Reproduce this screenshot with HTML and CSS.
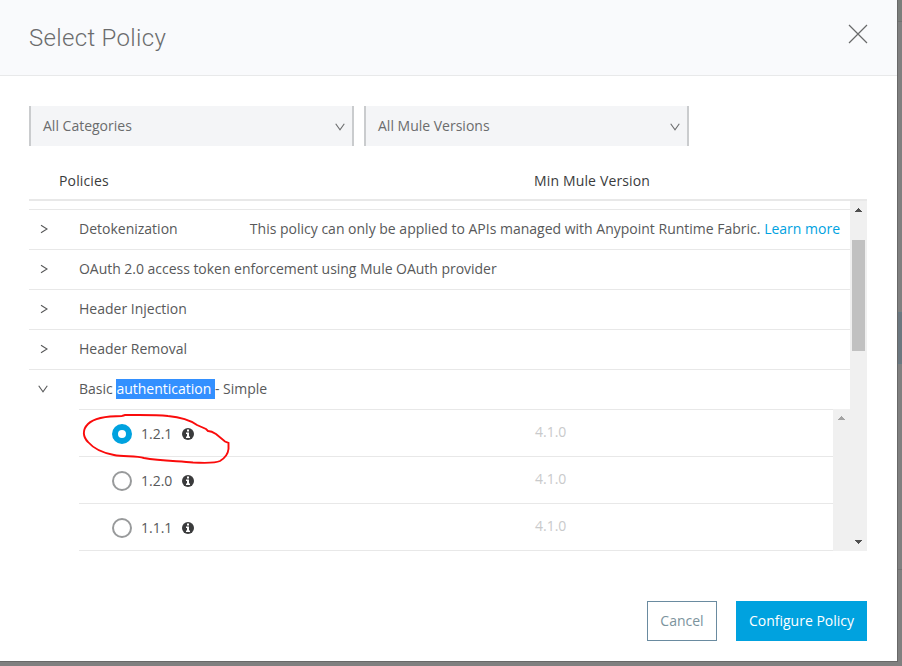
FILE: index.html
```html
<!DOCTYPE html>
<html lang="en">
<head>
<meta charset="utf-8">
<title>Select Policy</title>
<link rel="stylesheet" href="styles.css">
</head>
<body>
<div class="backdrop">
  <div class="modal">
    <header class="modal-header">
      <h1>Select Policy</h1>
      <svg class="close" viewBox="0 0 20 20"><path d="M1 1L19 19M19 1L1 19"/></svg>
    </header>
    <main class="modal-body">
      <div class="filters">
        <div class="select"><span>All Categories</span><svg class="chevron" viewBox="0 0 10 8"><path d="M.7 .7L5 6.9L9.3 .7"/></svg></div>
        <div class="select"><span>All Mule Versions</span><svg class="chevron" viewBox="0 0 10 8"><path d="M.7 .7L5 6.9L9.3 .7"/></svg></div>
      </div>
      <div class="table-head"><span class="col-policy">Policies</span><span>Min Mule Version</span></div>
      <div class="scroller">
        <div class="list">
          <div class="gap-row"></div>
          <div class="row"><svg class="caret" viewBox="0 0 8 10"><path d="M1 1.200L7 5L1 8.800"/></svg><span>Detokenization</span><span class="note">This policy can only be applied to APIs managed with Anypoint Runtime Fabric. <a>Learn more</a></span></div>
          <div class="row"><svg class="caret" viewBox="0 0 8 10"><path d="M1 1.200L7 5L1 8.800"/></svg><span class="long">OAuth 2.0 access token enforcement using Mule OAuth provider</span></div>
          <div class="row"><svg class="caret" viewBox="0 0 8 10"><path d="M1 1.200L7 5L1 8.800"/></svg><span>Header Injection</span></div>
          <div class="row"><svg class="caret" viewBox="0 0 8 10"><path d="M1 1.200L7 5L1 8.800"/></svg><span>Header Removal</span></div>
          <div class="row open"><svg class="caret down" viewBox="0 0 10 8"><path d="M.7 .7L5 6.9L9.3 .7"/></svg><span>Basic <mark>authentication </mark>- Simple</span></div>
          <div class="versions">
            <div class="version-list">
              <div class="version"><i class="radio checked"></i><span class="number">1.2.1</span><svg class="info" viewBox="0 0 12 12"><circle cx="6" cy="6" r="6"/><path d="M5 1.500h2v2H5zM4 4.500H7v4h1V10H4V8.500H5V6H4z"/></svg><span class="min">4.1.0</span></div>
              <div class="version"><i class="radio"></i><span class="number">1.2.0</span><svg class="info" viewBox="0 0 12 12"><circle cx="6" cy="6" r="6"/><path d="M5 1.500h2v2H5zM4 4.500H7v4h1V10H4V8.500H5V6H4z"/></svg><span class="min">4.1.0</span></div>
              <div class="version"><i class="radio"></i><span class="number">1.1.1</span><svg class="info" viewBox="0 0 12 12"><circle cx="6" cy="6" r="6"/><path d="M5 1.500h2v2H5zM4 4.500H7v4h1V10H4V8.500H5V6H4z"/></svg><span class="min">4.1.0</span></div>
            </div>
            <div class="scrollbar inner"><svg class="arrow" viewBox="0 0 7 4"><path d="M0 4V3h1V2h1V1h1V0h1v1h1v1h1v1h1v1z"/></svg></div>
          </div>
        </div>
        <div class="scrollbar">
          <svg class="arrow" viewBox="0 0 7 4"><path d="M0 4V3h1V2h1V1h1V0h1v1h1v1h1v1h1v1z"/></svg>
          <div class="thumb"></div>
          <svg class="arrow bottom" viewBox="0 0 7 4"><path d="M0 0V1h1V2h1V3h1V4h1V3h1V2h1V1h1V0z"/></svg>
        </div>
      </div>
    </main>
    <footer class="modal-footer">
      <button class="cancel">Cancel</button>
      <button class="primary">Configure Policy</button>
    </footer>
    <svg class="annotation" viewBox="0 0 150 52"><path d="M42 4C29 4 14 6 8 12C2 18 3 25 8 30C14 37 23 41 34 43C43 45 56 43.500 64 46C80 49 98 49 113 50.500C123 51 136 51 140 49C145 46 148 42 148.500 37V31L145 29.500L136 22C133 20 131 19 128 19L126 17L117 13C110 8 99 5 88 4C75 2.500 58 3 45 3L42 4"/></svg>
  </div>
  <div class="page-edge"><i class="edge-top"></i><i class="edge-panel"></i><i class="edge-rest"></i></div>
</div>
</body>
</html>
```

FILE: styles.css
```css
* { box-sizing: border-box; }
body { margin: 0; font: 14px/20px "Open Sans", sans-serif; color: #58595a; }
svg { display: block; flex: none; }
.backdrop { width: 902px; height: 666px; background: #808080; display: flex; overflow: hidden; }
.modal { position: relative; width: 898px; height: 662px; background: #fff; border: solid #686868; border-width: 0 1px 1px 0; }
.modal-header { height: 76px; padding: 0 29px; display: flex; align-items: center; justify-content: space-between; background: #f9fafc; border-bottom: 1px solid #e8e9ea; }
h1 { margin: 0; font: 300 24px/36px Roboto, sans-serif; letter-spacing: .32px; color: #6b6c6d; }
.close { width: 20px; height: 20px; margin: -7px 0 0; fill: none; stroke: #68696a; stroke-width: 1.2; }
.modal-body { padding: 30px 30px 0 29px; }
.filters { display: flex; gap: 10px; }
.select { width: 325px; height: 40px; padding: 0 7px 0 12px; display: flex; align-items: center; justify-content: space-between; background: #f4f5f7; border: solid #caccce; border-width: 0 2px; color: #6b6c6d; }
.chevron { width: 10px; height: 8px; margin-top: 2px; fill: none; stroke: #6b6c6d; stroke-width: 1.1; }
.table-head { height: 55px; padding: 25px 0 0 30px; display: flex; border-bottom: 2px solid #e8e8e8; font-weight: 500; letter-spacing: .15px; color: #3a3b3c; }
.col-policy { width: 475px; }
.scroller { display: flex; height: 350px; }
.list { flex: 1; min-width: 0; }
.gap-row { height: 9px; border-bottom: 1px solid #e8e8e8; }
.row { height: 40px; padding: 0 10px 1px 11px; display: flex; align-items: center; border-bottom: 1px solid #e8e8e8; white-space: nowrap; }
.row.open { height: 39px; padding: 0 10px 1px 9px; border: 0; }
.caret { width: 8px; height: 10px; margin-right: 31px; fill: none; stroke: #58595a; stroke-width: 1.1; }
.caret.down { width: 10px; height: 8px; margin-right: 31px; }
.long { letter-spacing: -.03px; }
.note { margin-left: auto; }
a { color: #00a2df; }
mark { display: inline-block; height: 20px; white-space: pre; background: #3390ff; color: #fff; }
.versions { display: flex; height: 142px; padding-left: 50px; }
.version-list { flex: 1; border-top: 1px solid #e8e8e8; }
.version { height: 47px; padding: 2px 0 0 33px; display: flex; align-items: center; border-bottom: 1px solid #e8e8e8; }
.radio { width: 20px; height: 20px; border: 2px solid #989a9b; border-radius: 50%; }
.radio.checked { border: 6px solid #00a2df; }
.number { width: 32px; margin: 0 9px; }
.info { width: 12px; height: 12px; fill: #3a3b3c; }
.info path { fill: #fff; }
.min { margin: -4px 0 0 341px; color: #c9cacb; }
.scrollbar { width: 17px; background: #f0f0f0; display: flex; flex-direction: column; align-items: center; padding-top: 7px; }
.arrow { width: 7px; height: 4px; fill: #505050; shape-rendering: crispEdges; }
.inner .arrow { fill: #a3a3a3; }
.thumb { width: 13px; height: 111px; margin-top: 28px; background: #c1c1c1; }
.bottom { margin: auto 0 7px; }
.modal-footer { display: flex; justify-content: flex-end; gap: 19px; padding: 50px 30px 0 0; }
button { height: 40px; padding: 0; font: inherit; border: 0; }
.cancel { width: 70px; background: #fff; border: 1px solid #6a8ba0; color: #7c939d; }
.primary { width: 131px; background: #00a2df; color: #fff; font-weight: 500; }
.annotation { position: absolute; left: 80px; top: 412px; width: 150px; height: 52px; fill: none; stroke: #fa0b0b; stroke-width: 1.9; }
.page-edge { width: 4px; display: flex; flex-direction: column; }
.edge-top { height: 22px; background: #7b7e7b; border-bottom: 1px solid #717171; }
.edge-panel { height: 52px; margin-top: 290px; background: #6c777f; border: solid #647b85; border-width: 1px 0; }
.edge-rest { height: 206px; border-bottom: 1px solid #727272; }
```
